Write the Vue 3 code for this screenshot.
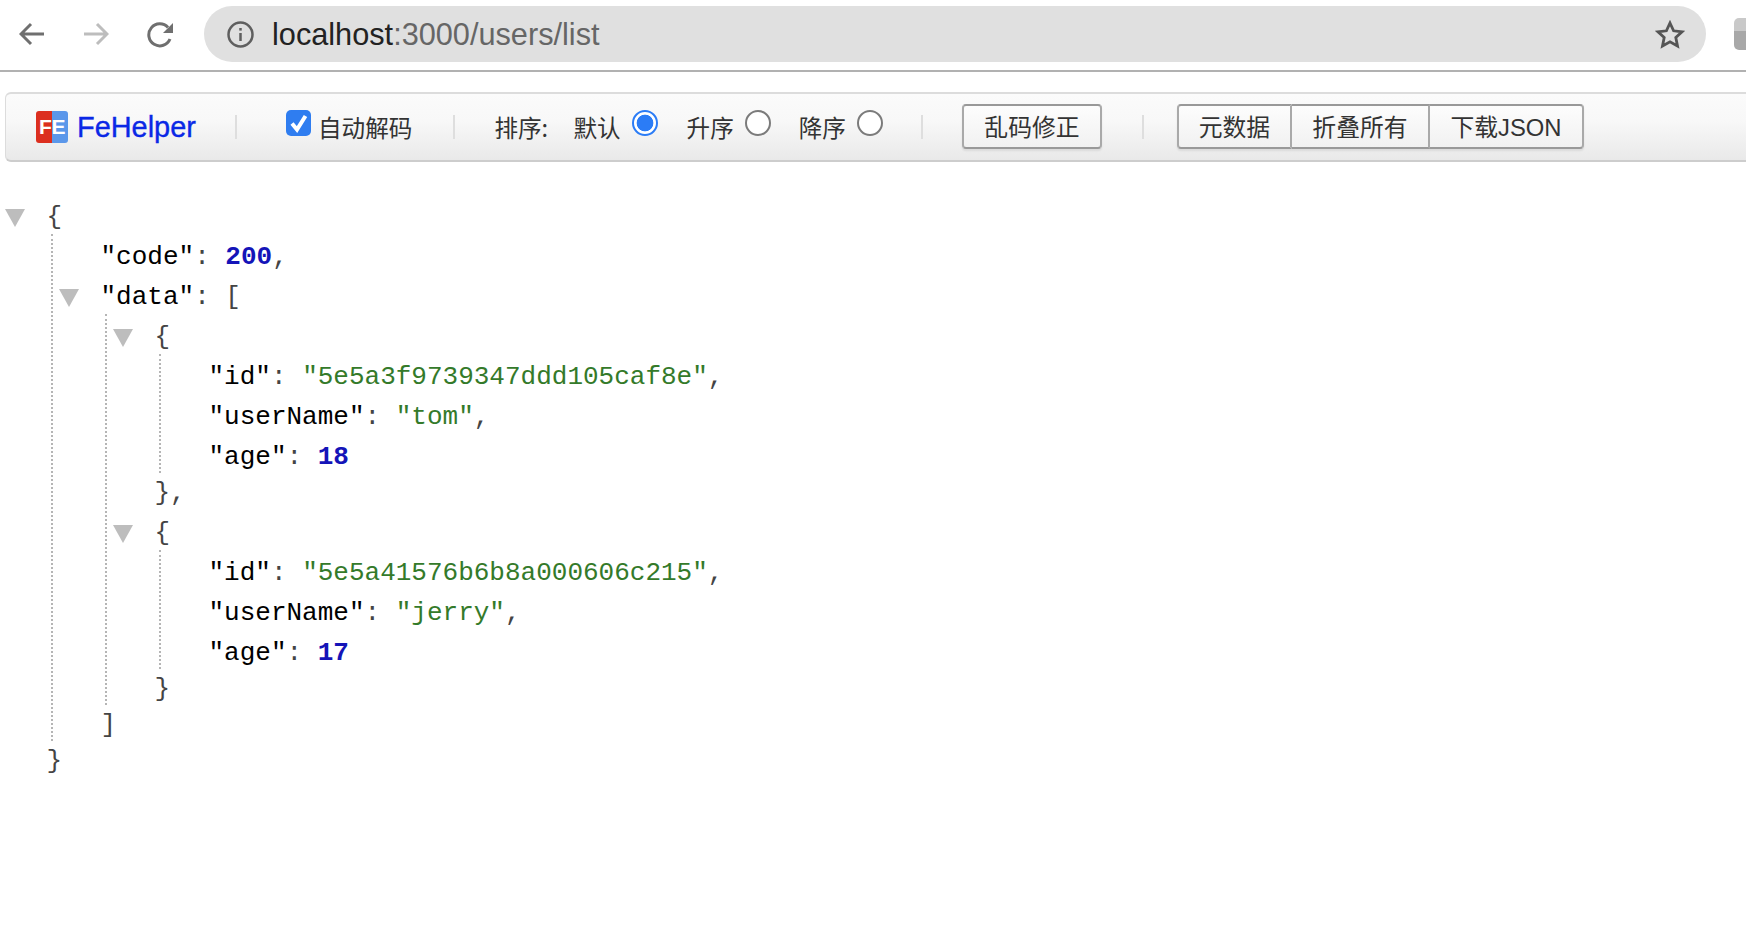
<script setup>
const users = [
  { id: '5e5a3f9739347ddd105caf8e', userName: 'tom', age: 18 },
  { id: '5e5a41576b6b8a000606c215', userName: 'jerry', age: 17 }
]
</script>

<template>
  <div class="page">
    <header class="chrome">
      <svg class="nav back" viewBox="0 0 26 24"><path d="M25 12H2M12 2 2 12l10 10" /></svg>
      <svg class="nav fwd" viewBox="0 0 26 24"><path d="M1 12h23M14 2l10 10-10 10" /></svg>
      <svg class="nav reload" viewBox="0 0 27 26"><path d="M23 17a11 11 0 1 1-2-11.5" /><path class="solid" d="M26 1v10H16z" /></svg>
      <div class="omni">
        <svg class="info" viewBox="0 0 27 27">
          <circle cx="13.5" cy="13.5" r="12" />
          <path d="M13.5 12v8" />
          <path d="M13.5 7v2.6" />
        </svg>
        <span class="url"><span class="host">localhost</span>:3000/users/list</span>
        <svg class="star" viewBox="0 0 30 29"><path d="M15 3l3.6 7.8 8.4 1-6.200 5.800 1.700 8.400L15 21.800 7.500 26l1.700-8.400L3 11.800l8.400-1z" /></svg>
      </div>
      <div class="ext"></div>
    </header>

    <section class="toolbar">
      <div class="logo"><span>FE</span></div>
      <span class="brand">FeHelper</span>
      <i class="sep s1"></i>
      <span class="check">
        <svg viewBox="0 0 25 26"><path d="M6 13.500l5 6L19.500 6" /></svg>
      </span>
      <span class="lbl auto">自动解码</span>
      <i class="sep s2"></i>
      <span class="lbl sort">排序:</span>
      <span class="lbl opt1">默认</span>
      <span class="radio on"></span>
      <span class="lbl opt2">升序</span>
      <span class="radio r2"></span>
      <span class="lbl opt3">降序</span>
      <span class="radio r2"></span>
      <i class="sep s3"></i>
      <button class="btn fix">乱码修正</button>
      <i class="sep s4"></i>
      <div class="group">
        <button class="btn b1">元数据</button>
        <button class="btn b2">折叠所有</button>
        <button class="btn b3">下载JSON</button>
      </div>
    </section>

    <main class="json">
      <div class="line"><i class="tri"></i><span class="p">{</span></div>
      <div class="kids">
        <div class="line"><span class="k">"code"</span><span class="p">: </span><span class="n">200</span><span class="p">,</span></div>
        <div class="line"><i class="tri"></i><span class="k">"data"</span><span class="p">: [</span></div>
        <div class="kids">
          <template v-for="(u, i) in users" :key="u.id">
            <div class="line"><i class="tri"></i><span class="p">{</span></div>
            <div class="kids">
              <div class="line"><span class="k">"id"</span><span class="p">: </span><span class="s">"{{ u.id }}"</span><span class="p">,</span></div>
              <div class="line"><span class="k">"userName"</span><span class="p">: </span><span class="s">"{{ u.userName }}"</span><span class="p">,</span></div>
              <div class="line"><span class="k">"age"</span><span class="p">: </span><span class="n">{{ u.age }}</span></div>
            </div>
            <div class="line close"><span class="p">}{{ i === 0 ? ',' : '' }}</span></div>
          </template>
        </div>
        <div class="line close"><span class="p">]</span></div>
      </div>
      <div class="line close"><span class="p">}</span></div>
    </main>
  </div>
</template>

<style>
html, body { margin: 0; background: #fff; overflow: hidden; }
</style>

<style scoped>
.page { width: 1746px; height: 948px; overflow: hidden; background: #fff; font-family: "Liberation Sans", Arial, sans-serif; }

.chrome { height: 70px; border-bottom: 2px solid #b1b1b1; display: flex; align-items: flex-start; box-sizing: content-box; }
.nav { flex: none; fill: none; stroke-width: 3; margin-top: 22px; }
.back { width: 26px; height: 24px; margin-left: 19px; stroke: #6f6f6f; }
.fwd { width: 26px; height: 24px; margin-left: 38px; stroke: #bdbdbd; }
.reload { width: 27px; height: 26px; margin-left: 38px; stroke: #6f6f6f; }
.reload .solid { fill: #6f6f6f; stroke: none; }

.omni { flex: none; width: 1502px; height: 56px; margin: 6px 0 0 30px; border-radius: 28px; background: #e0e0e0; display: flex; align-items: center; box-sizing: border-box; padding-left: 23px; }
.info { width: 27px; height: 27px; flex: none; fill: none; stroke: #5f5f5f; stroke-width: 2.500; }
.url { margin: 2px 0 0 18px; font-size: 30.700px; color: #666; line-height: 40px; white-space: nowrap; }
.host { color: #222; }
.star { width: 30px; height: 29px; margin-left: auto; margin-right: 21px; fill: none; stroke: #555; stroke-width: 2.800; flex: none; }
.ext { flex: none; width: 20px; height: 32px; margin: 18px 0 0 28px; border-radius: 5px; background: linear-gradient(#c9c9c9 40%, #a8a8a8 41%); }

.toolbar { display: flex; align-items: center; height: 70px; box-sizing: border-box; width: 1760px; margin: 20px 0 0 5px; border: 1px solid #dcdcdc; border-top-width: 2px; border-bottom: 2px solid #cdcdcd; border-radius: 6px; background: linear-gradient(#fbfbfb, #f8f8f8 40%, #e9e9e9); }
.logo { flex: none; width: 32px; height: 32px; margin-left: 30px; border-radius: 3px; background: linear-gradient(90deg, #dc2f1f 50%, #5b97ea 50%); display: flex; align-items: center; justify-content: center; }
.logo span { color: #fff; font-weight: 700; font-size: 21px; line-height: 32px; letter-spacing: -0.500px; }
.brand { margin-left: 9px; width: 120px; font-size: 28.900px; color: #0a28e6; white-space: nowrap; -webkit-text-stroke: 0.35px #0a28e6; }
.sep { flex: none; width: 2px; height: 24px; background: #dedede; }
.s1 { margin-left: 38px; }
.check { flex: none; width: 25px; height: 26px; margin: -8px 0 0 49px; border-radius: 5px; background: #2f7df0; display: block; }
.check svg { display: block; width: 25px; height: 26px; fill: none; stroke: #fff; stroke-width: 4; }
.lbl { flex: none; font-family: "Noto Sans CJK SC", "Liberation Sans", sans-serif; font-size: 23.600px; color: #333; line-height: 30px; margin-top: 0; white-space: nowrap; }
.auto { margin-left: 7px; }
.s2 { margin-left: 41px; }
.sort { margin-left: 39px; width: 79px; }
.opt1 { margin-left: 0; }
.opt2 { margin-left: 29px; }
.opt3 { margin-left: 28px; }
.radio { flex: none; width: 26px; height: 26px; box-sizing: border-box; margin: -8px 0 0 11px; border-radius: 50%; border: 2px solid #7b7b7b; background: #fff; }
.radio.on { border: 2.500px solid #2b7cf6; padding: 0; background: radial-gradient(circle, #2b7cf6 0 8px, #fff 8.700px); margin-left: 11px; }
.s3 { margin-left: 38px; }
.btn { flex: none; height: 45px; box-sizing: border-box; padding: 2px 0 0; margin: -1px 0 0 0; font-family: "Liberation Sans", "Noto Sans CJK SC", sans-serif; font-size: 23.800px; color: #333; border: 2px solid #a9a9a9; border-top-color: #999; border-bottom-color: #999; background: linear-gradient(#fdfdfd, #f1f1f1); line-height: 1; }
.fix { width: 140px; margin-left: 39px; border-radius: 4px; box-shadow: 0 2px 2px rgba(0,0,0,.08); }
.s4 { margin-left: 40px; }
.group { flex: none; display: flex; margin-left: 33px; border-radius: 4px; box-shadow: 0 2px 2px rgba(0,0,0,.08); margin-top: -1px; }
.group .btn { margin: 0; }
.b1 { width: 115px; border-radius: 4px 0 0 4px; }
.b2 { width: 138px; border-left: 0; }
.b3 { width: 154px; border-left: 0; border-radius: 0 4px 4px 0; }

.json { margin-top: 35px; font-family: "Liberation Mono", "Courier New", monospace; font-size: 26px; color: #000; }
.line { position: relative; height: 40px; line-height: 40px; padding-left: 46.500px; white-space: pre; }
.close { margin-top: -4px; }
.kids { position: relative; padding-left: 54px; }
.kids::before { content: ""; position: absolute; left: 51px; top: -3px; bottom: 4px; border-left: 2px dotted #b5b5b5; }
.tri { position: absolute; left: 5px; top: 12px; width: 20px; height: 18px; background: #bdbdbd; clip-path: polygon(0 0, 100% 0, 50% 100%); }
.k { color: #000; }
.p { color: #444; }
.s { color: #347a2a; }
.n { color: #1414b8; font-weight: 700; }
</style>
